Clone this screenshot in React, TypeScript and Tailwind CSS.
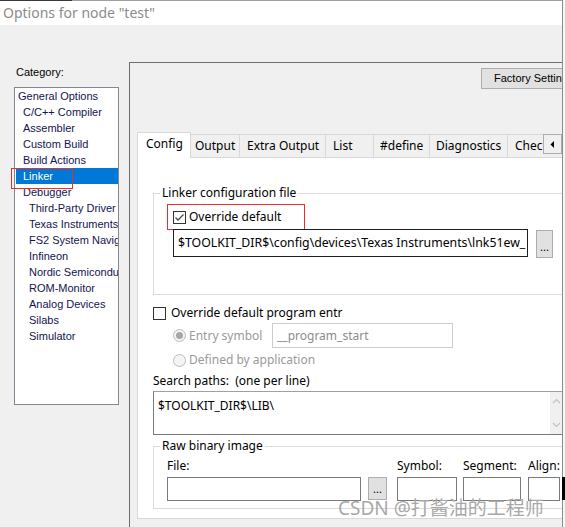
import React from 'react'

type Node = { label: string; level: 0 | 1 | 2; selected?: boolean }

const tree: Node[] = [
  { label: 'General Options', level: 0 },
  { label: 'C/C++ Compiler', level: 1 },
  { label: 'Assembler', level: 1 },
  { label: 'Custom Build', level: 1 },
  { label: 'Build Actions', level: 1 },
  { label: 'Linker', level: 1, selected: true },
  { label: 'Debugger', level: 1 },
  { label: 'Third-Party Driver', level: 2 },
  { label: 'Texas Instruments', level: 2 },
  { label: 'FS2 System Navigator', level: 2 },
  { label: 'Infineon', level: 2 },
  { label: 'Nordic Semiconductor', level: 2 },
  { label: 'ROM-Monitor', level: 2 },
  { label: 'Analog Devices', level: 2 },
  { label: 'Silabs', level: 2 },
  { label: 'Simulator', level: 2 },
]

const indent = { 0: 'pl-[2px]', 1: 'pl-[7px]', 2: 'pl-[13px]' }

// tab widths are fixed, taken from the screenshot
const tabs = [
  { label: 'Config', cls: 'w-[54px] pl-[8px]', active: true },
  { label: 'Output', cls: 'w-[49px] pl-[4px]' },
  { label: 'Extra Output', cls: 'w-[86px] pl-[7px]' },
  { label: 'List', cls: 'w-[48px] pl-[7px]' },
  { label: '#define', cls: 'w-[56px] pl-[6px]' },
  { label: 'Diagnostics', cls: 'w-[78px] pl-[6px]' },
  { label: 'Check', cls: 'w-[60px] pl-[7px]' },
]

function CheckBox({ checked }: { checked?: boolean }) {
  return (
    <span className="w-[13px] h-[13px] shrink-0 border border-[#333333] bg-white flex items-center justify-center">
      {checked && (
        <svg width="11" height="11" viewBox="0 0 11 11">
          <polyline points="1.5,5.5 4,8 9.5,2.5" fill="none" stroke="#4a4a4a" strokeWidth="1.3" />
        </svg>
      )}
    </span>
  )
}

function Radio({ checked }: { checked?: boolean }) {
  return (
    <span className="w-[13px] h-[13px] shrink-0 rounded-full border border-[#bcbcbc] bg-[#f4f4f4] flex items-center justify-center">
      {checked && <span className="w-[7px] h-[7px] rounded-full bg-[#a6a6a6]" />}
    </span>
  )
}

function DotsButton({ cls }: { cls: string }) {
  return (
    <div className={`${cls} shrink-0 bg-[#e1e1e1] border border-[#adadad] flex items-end justify-center pb-[5px] text-[11px] leading-none text-black`}>
      ...
    </div>
  )
}

export default function App() {
  return (
    <div className="w-[565px] h-[527px] overflow-hidden flex bg-[#f0f0f0] relative font-['Noto_Sans',sans-serif] text-[12px] text-black">
      <div className="w-[562px] h-full flex flex-col overflow-hidden">
        {/* title bar */}
        <div className="flex h-[1px]">
          <div className="w-[72px] bg-[#3a3a3a]" />
          <div className="flex-1 bg-[#a0a0a0]" />
        </div>
        <div className="h-[24px] bg-white pl-[3px] flex items-center text-[14px] text-[#8c8c8c] leading-none pb-[1px]">
          Options for node "test"
        </div>

        <div className="flex flex-1">
          {/* category column */}
          <div className="w-[129px] shrink-0 flex flex-col font-['Liberation_Sans',sans-serif] text-[11px]">
            <div className="pt-[40px] pl-[16px] leading-[14px]">Category:</div>
            <div className="relative mt-[8px] ml-[14px] w-[105px] h-[318px] border border-[#828790] bg-white overflow-hidden">
              {tree.map(n => (
                <div
                  key={n.label}
                  className={`ml-[1px] h-[16px] leading-[16px] whitespace-nowrap ${indent[n.level]} ${
                    n.selected ? 'bg-[#0078d7] text-white' : 'text-[#14144f]'
                  }`}
                >
                  {n.label}
                </div>
              ))}
            </div>
          </div>

          {/* options panel */}
          <div className="mt-[37px] w-[433px] shrink-0 border-l border-t border-[#6e6e6e] overflow-hidden flex flex-col">
            <div className="flex mt-[5px] ml-[351px]">
              <div className="w-[100px] h-[21px] shrink-0 bg-[#e1e1e1] border border-[#adadad] pl-[12px] flex items-center whitespace-nowrap font-['Liberation_Sans',sans-serif] text-[11px]">
                Factory Settings
              </div>
            </div>

            {/* tab strip */}
            <div className="relative z-10 flex mt-[43px] ml-[7px] h-[26px] -mb-px">
              <div className="w-[406px] overflow-hidden flex items-end">
                {tabs.map(t => (
                  <div
                    key={t.label}
                    className={`${t.cls} shrink-0 whitespace-nowrap border-t border-r border-[#d9d9d9] first:border-l ${
                      t.active
                        ? 'h-[26px] bg-white leading-[22px]'
                        : 'h-[24px] bg-[#f0f0f0] border-b leading-[22px]'
                    }`}
                  >
                    {t.label}
                  </div>
                ))}
              </div>
              <div className="w-[19px] h-[20px] mt-[2px] shrink-0 bg-[#f0f0f0] border border-[#adadad] flex items-center justify-center">
                <svg width="5" height="7" viewBox="0 0 5 7">
                  <polygon points="4,0 4,7 0.5,3.5" fill="#000" />
                </svg>
              </div>
            </div>

            {/* tab page */}
            <div className="ml-[7px] w-[460px] h-[362px] shrink-0 border border-[#d9d9d9] bg-white pl-[15px] flex flex-col">
              <fieldset className="mt-[27px] w-[460px] border border-[#dcdcdc]">
                <legend className="ml-[6px] px-[2px] leading-[16px]">Linker configuration file</legend>
                <div className="pl-[13px] pb-[36px]">
                  <div className="mt-[3px] w-[138px] h-[26px] border border-[#e8302a] pl-[5px] flex items-center gap-[3px]">
                    <CheckBox checked />
                    <span className="leading-[16px] whitespace-nowrap">Override default</span>
                  </div>
                  <div className="flex -mt-px ml-[6px] gap-[8px]">
                    <div className="w-[355px] h-[28px] border border-[#1e1e1e] bg-white pl-[4px] flex items-center whitespace-nowrap overflow-hidden text-[12.3px]">
                      $TOOLKIT_DIR$\config\devices\Texas Instruments\lnk51ew_
                    </div>
                    <DotsButton cls="w-[17px] h-[28px] mt-px" />
                  </div>
                </div>
              </fieldset>

              <div className="mt-[10px] h-[16px] flex items-center gap-[5px] whitespace-nowrap">
                <CheckBox />
                <span className="leading-[16px]">Override default program entr</span>
              </div>

              <div className="mt-[2px] h-[25px] pl-[20px] flex items-center text-[#9a9a9a]">
                <Radio checked />
                <span className="ml-[3px] w-[83px] leading-[16px]">Entry symbol</span>
                <div className="w-[181px] h-[25px] border border-[#cccccc] bg-white pl-[4px] flex items-center text-[#8c8c8c]">
                  __program_start
                </div>
              </div>

              <div className="mt-[4px] h-[16px] pl-[20px] flex items-center text-[#9a9a9a]">
                <Radio />
                <span className="ml-[3px] leading-[16px]">Defined by application</span>
              </div>

              <div className="mt-[5px] h-[16px] leading-[16px] whitespace-pre">Search paths:  (one per line)</div>

              <div className="mt-[2px] w-[410px] h-[44px] border border-[#7a7a7a] border-t-[#a0a0a0] bg-white flex">
                <div className="flex-1 pl-[4px] pt-[6px] leading-[16px]">$TOOLKIT_DIR$\LIB\</div>
                <div className="w-[12px] bg-[#f0f0f0] flex flex-col justify-between py-[6px] items-center">
                  <svg width="9" height="6" viewBox="0 0 9 6">
                    <polyline points="1,5 4.5,1.5 8,5" fill="none" stroke="#c2c2c2" strokeWidth="1.2" />
                  </svg>
                  <svg width="9" height="6" viewBox="0 0 9 6">
                    <polyline points="1,1 4.5,4.5 8,1" fill="none" stroke="#c2c2c2" strokeWidth="1.2" />
                  </svg>
                </div>
              </div>

              <fieldset className="mt-[3px] w-[460px] border border-[#dcdcdc]">
                <legend className="ml-[6px] px-[2px] leading-[16px]">Raw binary image</legend>
                <div className="pl-[13px] pb-[7px] mt-[4px] flex items-end">
                  <div className="flex flex-col">
                    <span className="h-[16px] leading-[16px]">File:</span>
                    <div className="mt-[3px] w-[194px] h-[24px] border border-[#7a7a7a] bg-white" />
                  </div>
                  <DotsButton cls="ml-[7px] w-[19px] h-[23px] mb-px" />
                  <div className="ml-[10px] flex flex-col">
                    <span className="h-[16px] leading-[16px]">Symbol:</span>
                    <div className="mt-[3px] w-[60px] h-[24px] border border-[#7a7a7a] bg-white" />
                  </div>
                  <div className="ml-[6px] flex flex-col">
                    <span className="h-[16px] leading-[16px]">Segment:</span>
                    <div className="mt-[3px] w-[58px] h-[24px] border border-[#7a7a7a] bg-white" />
                  </div>
                  <div className="ml-[7px] flex flex-col">
                    <span className="h-[16px] leading-[16px]">Align:</span>
                    <div className="mt-[3px] w-[32px] h-[24px] border border-[#7a7a7a] bg-white" />
                  </div>
                </div>
              </fieldset>
            </div>
          </div>
        </div>
      </div>

      {/* window edge */}
      <div className="w-[3px] flex flex-col">
        <div className="h-[477px] border-l border-[#8c8c8c] bg-[#f7f7f7]" />
        <div className="h-[23px] bg-black" />
        <div className="flex-1 border-l border-[#8c8c8c] bg-[#f7f7f7]" />
      </div>

      {/* annotation on the selected tree item */}
      <div className="absolute left-[11px] top-[168px] w-[62px] h-[21px] border border-[#e8302a]" />

      {/* watermark */}
      <div className="absolute left-[338px] top-[496px] text-[19px] leading-[24px] text-[#a9a9a9] whitespace-nowrap font-['Noto_Sans','Noto_Sans_CJK_SC',sans-serif]">
        CSDN @打酱油的工程师
      </div>
    </div>
  )
}
